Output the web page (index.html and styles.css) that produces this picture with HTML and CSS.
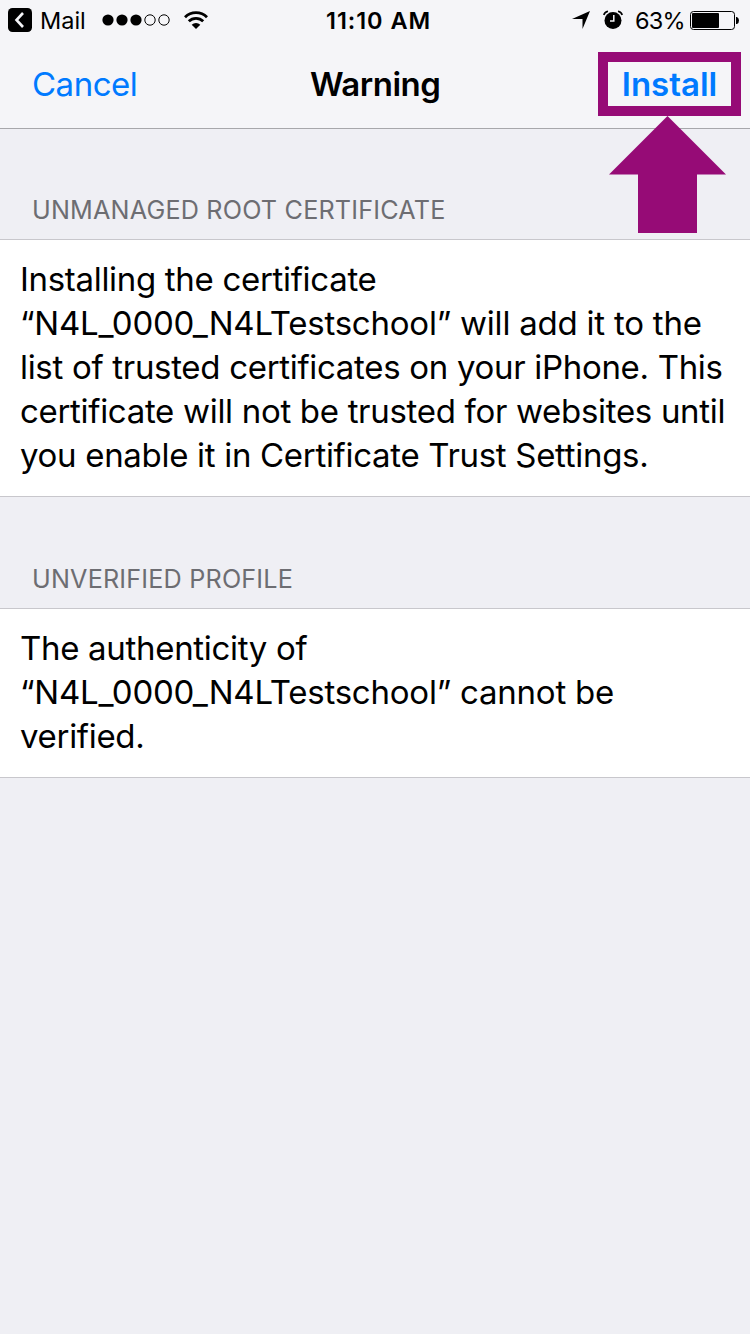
FILE: index.html
```html
<!DOCTYPE html>
<html lang="en">
<head>
<meta charset="utf-8">
<title>Warning</title>
<link rel="stylesheet" href="styles.css">
</head>
<body>
<div class="screen">
  <header class="top">
    <div class="status">
      <div class="status-left">
        <svg class="back" width="24" height="24" viewBox="0 0 24 24"><rect width="24" height="24" rx="4.500"/><path d="M15 5 8.500 12l6.500 7" fill="none" stroke="#f5f5f8" stroke-width="2.600"/></svg>
        <span class="mail">Mail</span>
        <svg class="signal" width="70" height="14" viewBox="0 0 70 14"><circle cx="7" cy="7" r="5.600"/><circle cx="21" cy="7" r="5.600"/><circle cx="35" cy="7" r="5.600"/><g fill="none" stroke="#000"><circle cx="49" cy="7" r="5.200"/><circle cx="63" cy="7" r="5.200"/></g></svg>
        <svg class="wifi" width="26" height="20" viewBox="0 0 26 20"><g fill="none" stroke="#000" stroke-width="2.800"><path d="M2 7.200a15.500 15.500 0 0 1 22 0"/><path d="M5.800 11.300a10.200 10.200 0 0 1 14.400 0"/></g><path d="M13 19l-4.300-4.300a6 6 0 0 1 8.600 0z"/></svg>
      </div>
      <span class="time">11:10 AM</span>
      <div class="status-right">
        <svg class="location" width="18" height="18" viewBox="0 0 18 18"><path d="M18 0 10.500 18V8H0z"/></svg>
        <svg class="alarm" width="20" height="20" viewBox="0 0 20 20"><circle cx="10" cy="10.500" r="8.500"/><path d="M10.800 5v6H7" fill="none" stroke="#f5f5f8" stroke-width="1.500"/><path d="M.8 5Q1.500 2 5 1.200M15 1.200Q18.500 2 19.200 5" fill="none" stroke="#000" stroke-width="1.600"/></svg>
        <span class="percent">63%</span>
        <svg class="battery" width="49" height="20" viewBox="0 0 49 20"><rect x=".5" y="1.500" width="44" height="18" rx="3" fill="none" stroke="#000"/><rect x="2" y="3" width="27" height="15" rx="1"/><path d="M46 7h1q2 1 2 3.500t-2 3.500h-1z"/></svg>
      </div>
    </div>
    <nav class="nav">
      <span class="cancel">Cancel</span>
      <h1 class="title">Warning</h1>
      <span class="install">Install<svg class="arrow" width="118" height="118" viewBox="0 0 118 118"><path d="M59.500 0 118 58.500H89V117H30V58.500H1z"/></svg></span>
    </nav>
  </header>
  <h2 class="heading">UNMANAGED ROOT CERTIFICATE</h2>
  <p class="card">Installing the certificate<br><span class="quoted">“N4L_0000_N4LTestschool” will add it to the</span><br>list of trusted certificates on your iPhone. This<br>certificate will not be trusted for websites until<br>you enable it in Certificate Trust Settings.</p>
  <h2 class="heading heading-next">UNVERIFIED PROFILE</h2>
  <p class="card">The authenticity of<br><span class="quoted">“N4L_0000_N4LTestschool” cannot be</span><br>verified.</p>
</div>
</body>
</html>
```
FILE: styles.css
```css
* { box-sizing: border-box; }
body { margin: 0; font-family: Inter, sans-serif; color: #000; background: #efeff4; }
.screen { width: 750px; height: 1334px; background: #efeff4; }
.top { height: 129px; background: #f5f5f8; border-bottom: 1px solid #a7a7ab; }
.status { height: 40px; display: grid; grid-template-columns: 326px 1fr auto; align-items: center; font-size: 23.5px; }
.status-left, .status-right { display: flex; align-items: center; }
.status-left { padding-left: 8px; }
.status svg { display: block; flex: none; }
.mail { margin-left: 8px; width: 47px; white-space: nowrap; }
.signal { margin-left: 14px; }
.wifi { margin-left: 12px; }
.time { font-weight: 600; font-size: 23.5px; letter-spacing: .95px; white-space: nowrap; padding-top: 1px; }
.status-right { padding-right: 11px; }
.alarm { margin-left: 13px; }
.percent { margin-left: 12px; width: 50px; padding-top: 1px; letter-spacing: -.8px; white-space: nowrap; }
.battery { margin-left: 5px; }
.nav { height: 88px; display: grid; grid-template-columns: 310px 288px 143px; align-items: center; font-size: 33px; letter-spacing: -.5px; }
.cancel { padding-left: 32px; color: #007aff; }
.title { margin: 0; font-size: 33px; font-weight: 600; }
.install { position: relative; height: 64px; border: 10px solid #960b76; color: #007aff; font-weight: 600; letter-spacing: 0; display: flex; align-items: center; justify-content: center; }
.arrow { position: absolute; left: 0; top: 54px; fill: #960b76; }
.heading { margin: 0; height: 110px; padding: 66px 0 0 32px; font-size: 25.2px; line-height: 30px; font-weight: 400; letter-spacing: .18px; color: #6d6d72; }
.heading-next { height: 111px; padding-top: 67px; }
.card { margin: 0; padding: 17px 20px 19px; background: #fff; border: solid #c8c7cc; border-width: 1px 0; font-size: 33px; line-height: 44px; letter-spacing: -.31px; white-space: nowrap; }
.quoted { letter-spacing: -.22px; }
```
